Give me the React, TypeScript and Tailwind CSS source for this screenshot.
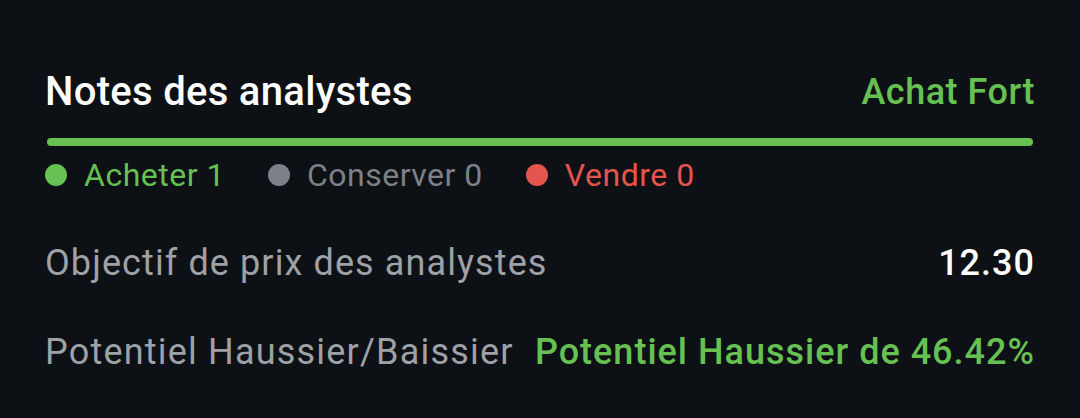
export default function App() {
  const legend = [
    { label: "Acheter 1", dot: "bg-[#66c152]", text: "text-[#66c152]" },
    { label: "Conserver 0", dot: "bg-[#7d8086]", text: "text-[#7d8086]" },
    { label: "Vendre 0", dot: "bg-[#e5554d]", text: "text-[#e5554d]" },
  ];

  return (
    <div className="h-[418px] w-[1080px] bg-[#0d1014] px-[45px] pt-[70px] font-['Roboto',sans-serif]">
      <div className="flex items-center justify-between">
        <h2 className="text-[40px] leading-[44px] font-medium tracking-[0.3px] text-white">Notes des analystes</h2>
        <span className="text-[36px] leading-[44px] font-medium tracking-[0.5px] text-[#66c152]">Achat Fort</span>
      </div>

      <div className="mt-[24px] ml-[2px] mr-[2px] h-[8px] rounded-full bg-[#66c152]" />

      <div className="mt-[9px] flex items-center">
        {legend.map((l) => (
          <div key={l.label} className="mr-[43px] flex items-center">
            <span className={`h-[22px] w-[22px] rounded-full ${l.dot}`} />
            <span className={`ml-[17px] text-[32px] leading-[40px] tracking-[0.5px] ${l.text}`}>{l.label}</span>
          </div>
        ))}
      </div>

      <div className="mt-[46px] flex items-center justify-between">
        <span className="text-[36px] leading-[44px] tracking-[1.1px] text-[#9ea1a6]">Objectif de prix des analystes</span>
        <span className="text-[36px] leading-[44px] font-medium tracking-[1px] text-white">12.30</span>
      </div>

      <div className="mt-[45px] flex items-center justify-between">
        <span className="text-[36px] leading-[44px] tracking-[1.2px] text-[#9ea1a6]">Potentiel Haussier/Baissier</span>
        <span className="text-[36px] leading-[44px] font-medium tracking-[1px] text-[#66c152]">Potentiel Haussier de 46.42%</span>
      </div>
    </div>
  );
}
